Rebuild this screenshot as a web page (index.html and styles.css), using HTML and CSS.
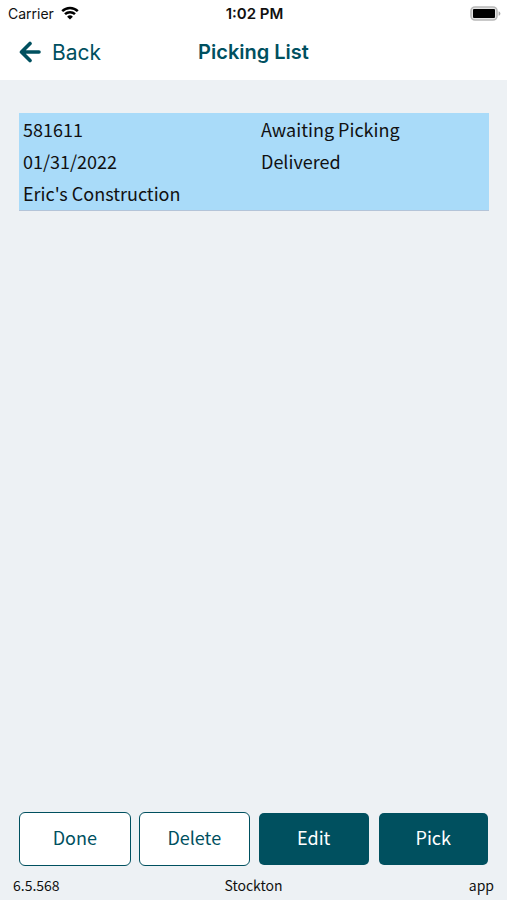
FILE: index.html
```html
<!DOCTYPE html>
<html lang="en">
<head>
    <meta charset="UTF-8">
    <meta name="viewport" content="width=device-width, initial-scale=1.0">
    <title>Picking List</title>
    <link rel="stylesheet" href="styles.css">
</head>
<body>
    <header class="header">
        <div class="status-bar">
            <div class="carrier">
                <span>Carrier</span>
                <svg class="wifi" viewBox="0 0 18 14" aria-hidden="true">
                    <path d="M1.200 5.200a11.200 11.200 0 0 1 15.600 0M4 8.200a7.200 7.200 0 0 1 10 0" fill="none" stroke="#000" stroke-width="2.500"/>
                    <path d="M9 13.600L6.100 10.700a4.100 4.100 0 0 1 5.800 0z"/>
                </svg>
            </div>
            <span class="time">1:02 PM</span>
            <svg class="battery" viewBox="0 0 31 15" aria-hidden="true">
                <rect x="1" y="1" width="26" height="13" rx="4" fill="#e4e4e4" stroke="#b8b8b8" stroke-width="1.6"/>
                <rect x="3" y="3" width="22" height="9" rx="1"/>
                <path d="M28.600 5.200c2.400 1 2.400 3.600 0 4.600z" fill="#a6a6a6"/>
            </svg>
        </div>
        <nav class="nav-bar">
            <a class="back" href="#">
                <svg class="arrow" viewBox="0 0 22 22" aria-hidden="true">
                    <path d="M20 11H3M11 2.500L2.500 11l8.500 8.500" fill="none" stroke="currentColor" stroke-width="3.600" stroke-linecap="round" stroke-linejoin="round"/>
                </svg>
                <span>Back</span>
            </a>
            <h1>Picking List</h1>
        </nav>
    </header>

    <main class="content">
        <div class="order">
            <span>581611</span>
            <span>Awaiting Picking</span>
            <span>01/31/2022</span>
            <span>Delivered</span>
            <span class="customer">Eric's Construction</span>
        </div>
    </main>

    <div class="actions">
        <button class="button" type="button">Done</button>
        <button class="button" type="button">Delete</button>
        <button class="button primary" type="button">Edit</button>
        <button class="button primary" type="button">Pick</button>
    </div>

    <footer class="footer">
        <span>6.5.568</span>
        <span>Stockton</span>
        <span>app</span>
    </footer>
</body>
</html>
```

FILE: styles.css
```css
* {
    box-sizing: border-box;
}

body {
    font-family: "Noto Sans CJK SC", "Noto Sans", sans-serif;
    background-color: #edf1f4;
    color: #111111;
    margin: 0;
    min-height: 100vh;
    display: flex;
    flex-direction: column;
}

.header {
    background-color: #ffffff;
    font-family: Inter, sans-serif;
    padding-bottom: 4px;
}

.status-bar {
    display: grid;
    grid-template-columns: 1fr auto 1fr;
    align-items: center;
    height: 28px;
    padding: 0 6px 2px 8px;
    font-size: 14px;
}

.carrier {
    display: flex;
    align-items: center;
    gap: 7px;
}

.wifi {
    width: 18px;
    height: 14px;
}

.time {
    font-size: 15px;
    font-weight: 600;
}

.battery {
    width: 31px;
    height: 15px;
    justify-self: end;
}

.nav-bar {
    display: grid;
    grid-template-columns: 1fr auto 1fr;
    align-items: center;
    height: 48px;
    padding: 0 19px;
    color: #00505f;
}

.back {
    display: flex;
    align-items: center;
    gap: 11px;
    color: inherit;
    font-size: 21px;
    text-decoration: none;
}

.arrow {
    width: 22px;
    height: 22px;
}

h1 {
    margin: 0;
    font-size: 20px;
    font-weight: 600;
}

.content {
    flex: 1;
    padding: 33px 18px 0 19px;
}

.order {
    display: grid;
    grid-template-columns: 1fr 1fr;
    gap: 0 14px;
    padding: 0 4px 1px;
    background-color: #a9dbf9;
    border-bottom: 1px solid #b4c4d8;
    font-size: 18px;
    line-height: 32px;
}

.customer {
    grid-column: 1 / -1;
}

.actions {
    display: grid;
    grid-template-columns: repeat(4, 1fr);
    gap: 8px;
    padding: 0 18px 0 19px;
}

.button {
    height: 54px;
    padding: 0 0 4px;
    border: 1px solid #00505f;
    border-radius: 6px;
    background-color: #ffffff;
    color: #00505f;
    font-family: inherit;
    font-size: 18px;
    cursor: pointer;
}

.primary {
    border-color: transparent;
    background-color: #00505f;
    background-clip: padding-box;
    color: #ffffff;
}

.footer {
    display: grid;
    grid-template-columns: 1fr auto 1fr;
    align-items: center;
    height: 34px;
    padding: 4px 13px 0;
    font-size: 14px;
}

.footer span:last-child {
    text-align: right;
}
```
